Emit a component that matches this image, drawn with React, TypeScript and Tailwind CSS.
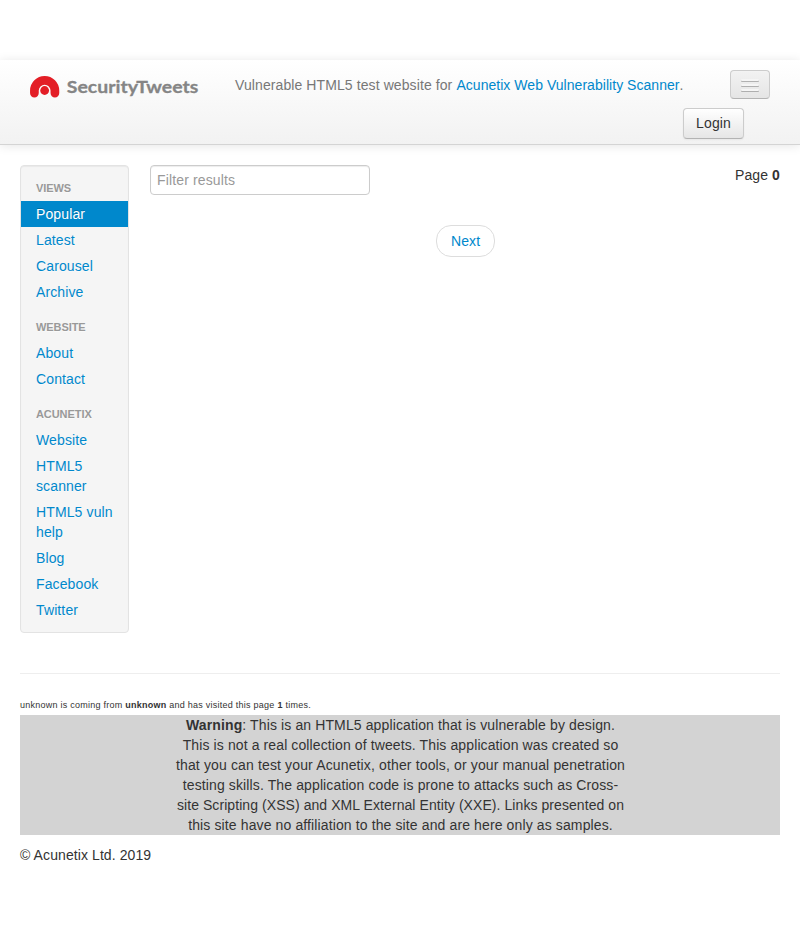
import React from "react";

type Group = { title: string; links: string[] };

const groups: Group[] = [
  { title: "Views", links: ["Popular", "Latest", "Carousel", "Archive"] },
  { title: "Website", links: ["About", "Contact"] },
  {
    title: "Acunetix",
    links: ["Website", "HTML5 scanner", "HTML5 vuln help", "Blog", "Facebook", "Twitter"],
  },
];

function Logo() {
  return (
    <svg className="block h-[36px] w-[180px]" viewBox="0 0 180 36" aria-label="SecurityTweets">
      <path
        d="M4.4 23.1V20.6A10.25 10.25 0 0 1 24.9 20.6V23.1"
        fill="none"
        stroke="#e31e26"
        strokeWidth="8.7"
        strokeLinecap="round"
      />
      <circle cx="14.65" cy="20.5" r="4.4" fill="#e31e26" />
      <text
        x="36.8"
        y="22.7"
        textLength="131.5"
        lengthAdjust="spacingAndGlyphs"
        strokeWidth="0.3"
        className="fill-[#858585] stroke-[#858585] text-[17.5px] font-bold [font-family:Lato,sans-serif]"
      >
        SecurityTweets
      </text>
    </svg>
  );
}

function Navbar() {
  return (
    <header className="mt-[60px] h-[85px] border-b border-[#d4d4d4] bg-linear-to-b from-white to-[#f2f2f2] px-5 shadow-[0_1px_10px_rgba(0,0,0,0.1)]">
      <div className="flex items-start">
        <a className="ml-[10px] w-[180px] pt-[10px]" href="#">
          <Logo />
        </a>
        <p className="ml-[25px] mt-[15px] whitespace-nowrap tracking-[0.095px] text-[#777]">
          Vulnerable HTML5 test website for{" "}
          <a className="tracking-[0.04px] text-[#0088cc]" href="#">
            Acunetix Web Vulnerability Scanner
          </a>
          .
        </p>
        <button
          aria-label="Menu"
          className="mr-[10px] mt-[10px] ml-auto flex h-[29px] w-10 flex-col items-center gap-[3px] rounded border border-[#cccccc] border-b-[#b3b3b3] bg-linear-to-b from-[#f2f2f2] to-[#e5e5e5] pt-[8px] shadow-[inset_0_1px_0_rgba(255,255,255,0.1),0_1px_0_rgba(255,255,255,0.075)]"
        >
          {[0, 1, 2].map((i) => (
            <span
              key={i}
              className="h-[2px] w-[18px] rounded-[1px] bg-[#f5f5f5] shadow-[0_1px_0_rgba(0,0,0,0.25)]"
            />
          ))}
        </button>
      </div>
      <div className="mr-9 flex justify-end">
        <button className="mt-[2px] h-[31px] w-[61px] rounded border border-[#cccccc] border-b-[#b3b3b3] bg-linear-to-b from-white to-[#e6e6e6] pb-[2px] tracking-[0.1px] text-[#333] shadow-[inset_0_1px_0_rgba(255,255,255,0.2),0_1px_2px_rgba(0,0,0,0.05)]">
          Login
        </button>
      </div>
    </header>
  );
}

function Sidebar() {
  return (
    <nav className="w-[109px] shrink-0 rounded border border-[#e3e3e3] bg-[#f5f5f5] py-[9px] shadow-[inset_0_1px_1px_rgba(0,0,0,0.05)]">
      {groups.map((group, g) => (
        <ul key={group.title} className={g > 0 ? "mt-[9px]" : ""}>
          <li className="px-[15px] py-[3px] text-[11px] font-bold uppercase leading-5 tracking-[-0.07px] text-[#999] [text-shadow:0_1px_0_rgba(255,255,255,0.5)]">
            {group.title}
          </li>
          {group.links.map((link) => (
            <li key={link}>
              <a
                href="#"
                className={
                  link === "Popular"
                    ? "block bg-[#0088cc] px-[15px] py-[3px] tracking-[0.12px] text-white [text-shadow:0_-1px_0_rgba(0,0,0,0.2)]"
                    : "block px-[15px] py-[3px] tracking-[0.12px] text-[#0088cc] [text-shadow:0_1px_0_rgba(255,255,255,0.5)]"
                }
              >
                {link}
              </a>
            </li>
          ))}
        </ul>
      ))}
    </nav>
  );
}

function Results() {
  return (
    <section className="min-w-0 flex-1">
      <div className="flex items-start justify-between">
        <input
          placeholder="Filter results"
          className="h-[30px] w-[220px] rounded border border-[#cccccc] bg-white px-[6px] py-1 text-[14px] leading-5 tracking-[0.14px] shadow-[inset_0_1px_1px_rgba(0,0,0,0.075)] placeholder:text-[#999]"
        />
        <p className="tracking-[0.1px]">
          Page <strong>0</strong>
        </p>
      </div>
      <div className="mt-[30px] flex justify-center">
        <a
          href="#"
          className="w-[59px] rounded-[15px] border border-[#dddddd] bg-white py-[5px] pl-[14.5px] tracking-[0.1px] text-[#0088cc]"
        >
          Next
        </a>
      </div>
    </section>
  );
}

export default function App() {
  return (
    <div className="flow-root min-h-[935px] bg-white font-['Liberation_Sans',Arial,sans-serif] text-[14px] leading-5 text-[#333]">
      <Navbar />
      <main className="mt-5 flex items-start gap-[21px] px-5">
        <Sidebar />
        <Results />
      </main>
      <footer className="px-5">
        <hr className="mt-10 mb-[21px] border-t border-[#eeeeee]" />
        <p className="text-[9px] leading-5 tracking-[0.25px]">
          unknown is coming from <strong>unknown</strong> and has visited this page{" "}
          <strong>1</strong> times.
        </p>
        <div className="bg-[#d3d3d3] text-center">
          <p className="mx-auto w-[454px] pl-px tracking-[0.12px]">
            <strong>Warning</strong>: This is an HTML5 application that is vulnerable by design.
            <br />
            <span className="tracking-[0.11px]">
              This is not a real collection of tweets. This application was created so
            </span>
            <br />
            <span className="tracking-[0.14px]">
              that you can test your Acunetix, other tools, or your manual penetration
            </span>
            <br />
            testing skills. The application code is prone to attacks such as Cross-
            <br />
            <span className="tracking-[0.07px]">
              site Scripting (XSS) and XML External Entity (XXE). Links presented on
            </span>
            <br />
            this site have no affiliation to the site and are here only as samples.
          </p>
        </div>
        <p className="mt-[10px] tracking-[0.09px]">© Acunetix Ltd. 2019</p>
      </footer>
    </div>
  );
}
